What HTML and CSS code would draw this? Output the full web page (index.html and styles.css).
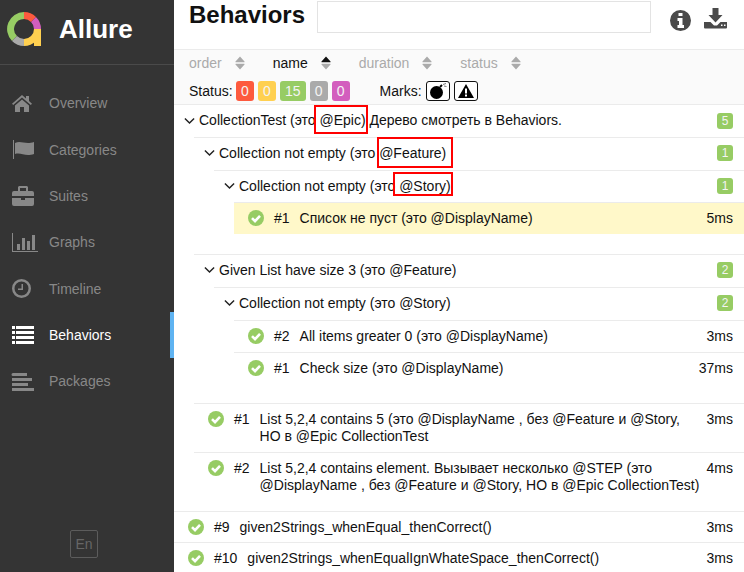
FILE: index.html
```html
<!DOCTYPE html>
<html lang="en">
<head>
  <meta charset="UTF-8">
  <title>Allure</title>
  <link rel="stylesheet" href="styles.css">
</head>
<body>
  <svg class="defs" width="0" height="0">
    <symbol id="check" viewBox="0 0 16 16">
      <circle cx="8" cy="8" r="8" fill="#97cc64"/>
      <path d="M4 8.200l3 3 5-5.400" fill="none" stroke="#fff" stroke-width="2.600"/>
    </symbol>
    <symbol id="chevron" viewBox="0 0 12 8">
      <path d="M1 1.200l5 5 5-5" fill="none" stroke="#222" stroke-width="1.600"/>
    </symbol>
    <symbol id="sort" viewBox="0 0 10 14">
      <path d="M5 0.500l4.500 5a.5.5 0 0 1-.4.800H.9a.5.5 0 0 1-.4-.8z" fill="currentColor"/>
      <path d="M5 13.500L.5 8.500a.5.5 0 0 1 .4-.8h8.200a.5.5 0 0 1 .4.800z" fill="#aaa"/>
    </symbol>
  </svg>

  <aside class="sidebar">
    <div class="brand">
      <svg class="logo" width="36" height="36" viewBox="0 0 36 36">
        <g fill="none" stroke-width="7">
          <path d="M7.500 27.500A13.500 13.500 0 0 1 17 4.500" stroke="#97cc64"/>
          <path d="M17 4.500A13.500 13.500 0 0 1 26.500 8.500" stroke="#fd5a3e"/>
          <path d="M26.500 8.500A13.500 13.500 0 0 1 30.500 18" stroke="#d35ebe"/>
          <path d="M7.500 27.500A13.500 13.500 0 0 0 17 31.500" stroke="#aaa"/>
          <path d="M17 31.500A13.500 13.500 0 0 0 30.500 18V35" stroke="#ffd050"/>
        </g>
      </svg>
      <span class="brand-name">Allure</span>
    </div>
    <nav class="nav">
      <a class="nav-item">
        <svg class="nav-icon" viewBox="0 -1 26 20" preserveAspectRatio="xMinYMid meet"><path d="M10 0L0 8.700l1.200 1.400L10 2.600l8.800 7.500 1.200-1.400-3-2.700V1h-3v2.600zM3 10.500V17h5v-5h4v5h5v-6.500L10 4.500z"/></svg>
        Overview
      </a>
      <a class="nav-item">
        <svg class="nav-icon" viewBox="0 -1 26 20" preserveAspectRatio="xMinYMid meet"><path d="M1 -1h1v19H1zM3 2c6-3 10 2 19-1v12c-9 3-13-2-19 0z"/></svg>
        Categories
      </a>
      <a class="nav-item">
        <svg class="nav-icon" viewBox="0 0 26 20" preserveAspectRatio="xMinYMid meet"><path fill-rule="evenodd" d="M7 0h8l1 1v4h4a2 2 0 0 1 2 2v3H0V7a2 2 0 0 1 2-2h4V1zM8 2v3h6V2zM0 12h9v2h4v-2h9v6a2 2 0 0 1-2 2H2a2 2 0 0 1-2-2z"/></svg>
        Suites
      </a>
      <a class="nav-item">
        <svg class="nav-icon" viewBox="0 0 26 20" preserveAspectRatio="xMinYMid meet"><path d="M0 0h1v18h25v1H0zM5 11h3v6H5zM10 5h3v12h-3zM15 8h3v9h-3zM20 2h3v15h-3z"/></svg>
        Graphs
      </a>
      <a class="nav-item">
        <svg class="nav-icon" viewBox="0 0 26 20" preserveAspectRatio="xMinYMid meet"><path fill-rule="evenodd" d="M9.500 0a9.500 9.500 0 1 0 0 19 9.500 9.500 0 0 0 0-19zm0 2.500a7 7 0 1 1 0 14 7 7 0 0 1 0-14zM9.500 5H11v6H6V9.500h3.500z"/></svg>
        Timeline
      </a>
      <a class="nav-item active">
        <svg class="nav-icon" viewBox="0 -1 26 20" preserveAspectRatio="xMinYMid meet"><path d="M0 0h3v3H0zM4 0h18v3H4zM0 5h3v3H0zM4 5h18v3H4zM0 10h3v3H0zM4 10h18v3H4zM0 15h3v3H0zM4 15h18v3H4z"/></svg>
        Behaviors
      </a>
      <a class="nav-item">
        <svg class="nav-icon" viewBox="0 -1 26 20" preserveAspectRatio="xMinYMid meet"><path d="M1 0h14v3H1a1 1 0 0 1 0-3zM0 5h20v3H0zM0 10h16v3H0zM0 15h22v3H0z"/></svg>
        Packages
      </a>
    </nav>
    <div class="lang">En</div>
  </aside>

  <main class="main">
    <header class="top">
      <h1 class="title">Behaviors</h1>
      <input class="search" type="text">
      <svg class="top-icon info" viewBox="0 0 21 21"><path fill-rule="evenodd" d="M10.500 0a10.500 10.500 0 1 0 0 21 10.500 10.500 0 0 0 0-21zM8.500 3h4v3h-4zM7.500 8h5v7h1.500v3H7.500v-3H9v-4H7.500z"/></svg>
      <svg class="top-icon download" viewBox="0 0 23 21"><path fill-rule="evenodd" d="M8.500 0h6v7h4l-7 7.500L4.500 7h4zM0 14h6.500l3.500 3.500h3l3.500-3.500H23v5.500a1 1 0 0 1-1 1H1a1 1 0 0 1-1-1zM17 16.500h1.500V18H17zM20 16.500h1.500V18H20z"/></svg>
    </header>

    <section class="toolbar">
      <div class="sorts">
        <span class="sort">order <svg class="sort-icon"><use href="#sort"/></svg></span>
        <span class="sort current">name <svg class="sort-icon"><use href="#sort"/></svg></span>
        <span class="sort">duration <svg class="sort-icon"><use href="#sort"/></svg></span>
        <span class="sort">status <svg class="sort-icon"><use href="#sort"/></svg></span>
      </div>
      <div class="filters">
        <span>Status:</span>
        <span class="badges">
          <span class="badge failed">0</span>
          <span class="badge broken">0</span>
          <span class="badge passed">15</span>
          <span class="badge skipped">0</span>
          <span class="badge unknown">0</span>
        </span>
        <span class="marks-label">Marks:</span>
        <span class="badges">
          <span class="mark"><svg width="18" height="16" viewBox="0 0 18 16"><circle cx="7.500" cy="9.500" r="6.500"/><path d="M11 4l2-2" stroke="#000" stroke-width="2"/><path d="M14 1.500l3-1M15 3l2.500.5" stroke="#777"/></svg></span>
          <span class="mark"><svg width="16" height="14" viewBox="0 0 16 14"><path fill-rule="evenodd" d="M8 0l8 14H0zM7 4.500h2v5H7zM7 10.500h2v2H7z"/></svg></span>
        </span>
      </div>
    </section>

    <section class="tree">
      <div class="head">
        <svg class="chevron"><use href="#chevron"/></svg>
        <span class="name">CollectionTest (это @Epic) Дерево смотреть в Behaviors.</span>
        <span class="count">5</span>
      </div>
      <div class="children">
        <div class="head">
          <svg class="chevron"><use href="#chevron"/></svg>
          <span class="name">Collection not empty (это @Feature)</span>
          <span class="count">1</span>
        </div>
        <div class="children">
          <div class="head">
            <svg class="chevron"><use href="#chevron"/></svg>
            <span class="name">Collection not empty (это @Story)</span>
            <span class="count">1</span>
          </div>
          <div class="children">
            <div class="leaf selected">
              <svg class="check"><use href="#check"/></svg>
              <span class="num">#1</span>
              <span class="name">Список не пуст (это @DisplayName)</span>
              <span class="time">5ms</span>
            </div>
          </div>
        </div>

        <div class="head">
          <svg class="chevron"><use href="#chevron"/></svg>
          <span class="name">Given List have size 3 (это @Feature)</span>
          <span class="count">2</span>
        </div>
        <div class="children">
          <div class="head">
            <svg class="chevron"><use href="#chevron"/></svg>
            <span class="name">Collection not empty (это @Story)</span>
            <span class="count">2</span>
          </div>
          <div class="children">
            <div class="leaf">
              <svg class="check"><use href="#check"/></svg>
              <span class="num">#2</span>
              <span class="name">All items greater 0 (это @DisplayName)</span>
              <span class="time">3ms</span>
            </div>
            <div class="leaf">
              <svg class="check"><use href="#check"/></svg>
              <span class="num">#1</span>
              <span class="name">Check size (это @DisplayName)</span>
              <span class="time">37ms</span>
            </div>
          </div>
        </div>

        <div class="leaf">
          <svg class="check"><use href="#check"/></svg>
          <span class="num">#1</span>
          <span class="name">List 5,2,4 contains 5 (это @DisplayName , без @Feature и @Story, НО в @Epic CollectionTest</span>
          <span class="time">3ms</span>
        </div>
        <div class="leaf">
          <svg class="check"><use href="#check"/></svg>
          <span class="num">#2</span>
          <span class="name">List 5,2,4 contains element. Вызывает несколько @STEP (это @DisplayName , без @Feature и @Story, НО в @Epic CollectionTest)</span>
          <span class="time">4ms</span>
        </div>
      </div>

      <div class="leaf">
        <svg class="check"><use href="#check"/></svg>
        <span class="num">#9</span>
        <span class="name">given2Strings_whenEqual_thenCorrect()</span>
        <span class="time">3ms</span>
      </div>
      <div class="leaf">
        <svg class="check"><use href="#check"/></svg>
        <span class="num">#10</span>
        <span class="name">given2Strings_whenEqualIgnWhateSpace_thenCorrect()</span>
        <span class="time">3ms</span>
      </div>
    </section>

    <!-- red annotations drawn over the screenshot -->
    <div class="note note-epic"></div>
    <div class="note note-feature"></div>
    <div class="note note-story"></div>
  </main>
</body>
</html>
```

FILE: styles.css
```css
html, body {
  height: 100%;
}

body {
  margin: 0;
  display: flex;
  overflow: hidden;
  font-family: "Liberation Sans", Arial, sans-serif;
  font-size: 14px;
  line-height: 17px;
  color: #111;
  background: #fff;
}

.defs {
  position: absolute;
}

/* sidebar */
.sidebar {
  width: 174px;
  flex: none;
  display: flex;
  flex-direction: column;
  background: #343434;
}

.brand {
  height: 64px;
  display: flex;
  align-items: center;
  padding-left: 7px;
  border-bottom: 1px solid #4a4a4a;
}

.logo {
  margin-bottom: 6px;
}

.brand-name {
  margin: 0 0 6px 16px;
  font-size: 26px;
  line-height: 30px;
  font-weight: bold;
  color: #fff;
}

.nav {
  padding-top: 15.7px;
}

.nav-item {
  height: 46.3px;
  display: flex;
  align-items: center;
  color: #888;
}

.nav-icon {
  width: 26px;
  height: 20px;
  flex: none;
  margin: 0 11px 0 12px;
  fill: #888;
  overflow: visible;
}

.nav-item.active {
  color: #fff;
  box-shadow: inset -4px 0 0 #5fb3f1;
}

.nav-item.active .nav-icon {
  fill: #fff;
}

.lang {
  width: 26px;
  height: 26px;
  margin: auto 0 14px 70px;
  display: flex;
  align-items: center;
  justify-content: center;
  border: 1px solid #5c5c5c;
  border-radius: 2px;
  color: #666;
}

/* main column */
.main {
  flex: 1;
  min-width: 0;
  position: relative;
}

.top {
  height: 49px;
  display: flex;
  align-items: flex-start;
  padding-left: 15px;
}

.title {
  width: 128px;
  margin: 0;
  font-size: 24px;
  line-height: 30px;
  font-weight: bold;
}

.search {
  width: 334px;
  height: 32px;
  margin: 1px 0 0;
  padding: 0;
  box-sizing: border-box;
  border: 1px solid #e3e3e3;
  background: #fff;
}

.top-icon {
  fill: #4a4a4a;
}

.info {
  width: 21px;
  height: 21px;
  margin: 10px 0 0 19px;
}

.download {
  width: 23px;
  height: 21px;
  margin: 8px 0 0 13px;
}

.toolbar {
  height: 54px;
  padding-left: 15px;
  border-top: 1px solid #ebebeb;
  border-bottom: 1px solid #ebebeb;
  background: #fafafa;
}

.sorts {
  display: flex;
  gap: 28px;
  height: 26px;
  align-items: center;
  margin-bottom: 5px;
}

.sort {
  display: flex;
  align-items: center;
  color: #aaa;
}

.sort.current {
  color: #111;
}

.sort-icon {
  width: 10px;
  height: 14px;
  margin-left: 13px;
  color: #aaa;
}

.sort.current .sort-icon {
  color: #111;
}

.filters {
  display: flex;
  align-items: center;
}

.badges {
  display: flex;
  gap: 4px;
  margin-left: 3.4px;
}

.badge {
  min-width: 8px;
  padding: 0 5px;
  height: 20px;
  line-height: 20px;
  text-align: center;
  border-radius: 3px;
  color: #f4f4f4;
}

.failed { background: #fd5a3e; }
.broken { background: #ffd050; }
.passed { background: #97cc64; }
.skipped { background: #aaa; }
.unknown { background: #d35ebe; }

.marks-label {
  margin: 0 0.6px 0 30px;
}

.mark {
  width: 22px;
  height: 18px;
  display: flex;
  align-items: center;
  justify-content: center;
  border: 1px solid #111;
  border-radius: 3px;
  background: #fff;
}

/* tree */
.head, .leaf {
  display: flex;
  align-items: flex-start;
  border-top: 1px solid #ebebeb;
}

.leaf {
  padding: 7px 11px 7px 14px;
}

.tree > .leaf {
  padding-bottom: 6.5px;
}

.tree > .head:first-child {
  border-top: 0;
}

.head {
  padding: 7px 11px 7.8px 10px;
  align-items: center;
}

.chevron {
  width: 11px;
  height: 8px;
  flex: none;
  margin-right: 4px;
}

.children {
  padding: 0 0 9.8px 20px;
}

.name {
  flex: 1;
  min-width: 0;
}

.check {
  width: 16px;
  height: 16px;
  flex: none;
  margin-right: 10px;
}

.num {
  margin-right: 10px;
}

.time {
  margin-left: 4px;
}

.count {
  min-width: 8px;
  height: 16px;
  padding: 0 4px;
  border-radius: 3px;
  background: #97cc64;
  color: #f4f4f4;
  font-size: 12px;
  line-height: 16px;
  text-align: center;
}

.selected {
  background: #fff8c9;
}

/* annotations */
.note {
  position: absolute;
  box-sizing: border-box;
  border: 2px solid #f00;
}

.note-epic {
  left: 140px;
  top: 105px;
  width: 54px;
  height: 29px;
}

.note-feature {
  left: 203px;
  top: 137px;
  width: 76px;
  height: 31px;
}

.note-story {
  left: 219px;
  top: 172px;
  width: 60px;
  height: 24px;
}
```
